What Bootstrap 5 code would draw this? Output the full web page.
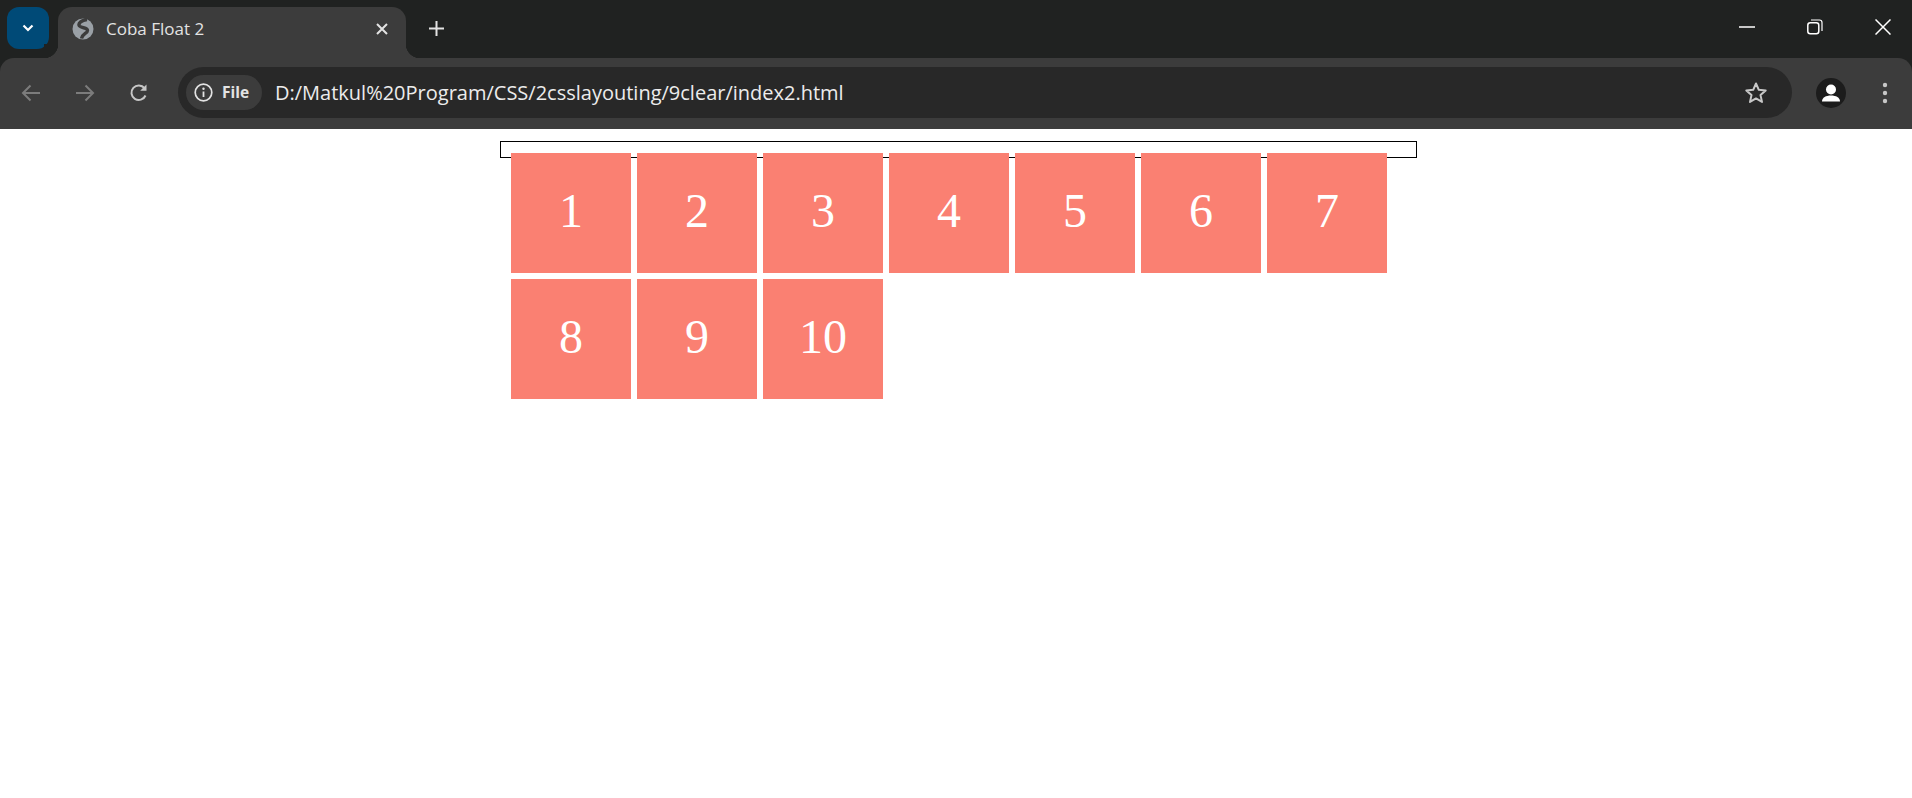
<!DOCTYPE html>
<html lang="en">
<head>
  <meta charset="UTF-8">
  <title>Coba Float 2</title>
  <link href="https://cdn.jsdelivr.net/npm/bootstrap@5.3.0/dist/css/bootstrap.min.css" rel="stylesheet">
  <style>
    body { background: #fff; font-family: "Open Sans", "Noto Sans", sans-serif; }

    /* browser chrome */
    .chrome-head { background: #202221; }
    .tab-strip { height: 58px; padding-left: 7px; }
    .tab-search { width: 42px; height: 42px; margin-top: 7px; background: #004a77; border-radius: 12px; }
    .tab-item { position: relative; width: 348px; height: 51px; margin-top: 7px; margin-left: 9px; padding: 0 17px 7px 14px; background: #3c3c3c; border-radius: 14px 14px 0 0; color: #e3e3e3; font-size: 17px; }
    .tab-item::before, .tab-item::after { content: ""; position: absolute; bottom: 0; width: 14px; height: 14px; }
    .tab-item::before { left: -14px; background: radial-gradient(circle at 0 0, #202221 14px, #3c3c3c 14.5px); }
    .tab-item::after { right: -14px; background: radial-gradient(circle at 100% 0, #202221 14px, #3c3c3c 14.5px); }
    .tab-title { margin-left: 12px; }
    .tab-plus { margin-left: 16px; margin-top: 6px; width: 28px; height: 44px; }
    .win-strip { margin-right: -5px; }
    .win-btn { width: 68px; height: 54px; }
    .tool-bar { height: 71px; background: #3c3c3c; border-top-left-radius: 14px; border-top-right-radius: 14px; padding-bottom: 2px; }
    .tool-btn { width: 54px; height: 54px; }
    .omni-box { width: 1614px; height: 51px; margin-left: 12px; padding: 0 13px 0 8px; background: #282828; border-radius: 26px; }
    .file-chip { width: 76px; height: 35px; padding-left: 8px; background: #3c3c3c; border-radius: 18px; color: #e3e3e3; font-size: 15.500px; font-weight: 700; }
    .file-chip span { margin-left: 9px; }
    .url-text { margin-left: 13px; color: #ececec; font-size: 20px; white-space: nowrap; }
    .star-wrap { width: 46px; }
    .avatar-wrap { width: 30px; height: 30px; margin-left: 24px; border-radius: 50%; background: #1c1c1c; overflow: hidden; }
    .menu-wrap { margin-left: 24px; width: 30px; }

    /* page content */
    .demo-frame { box-sizing: border-box; width: 917px; height: 17px; margin: 12px 0 0 500px; border: 1px solid #000; }
    .demo-grid { width: 917px; margin: -5px 0 0 511px; gap: 6px; }
    .num-box { flex: 0 0 120px; width: 120px; height: 120px; background: #fa8072; color: #fff; font-family: "Liberation Serif", "Times New Roman", serif; font-size: 48px; line-height: 115px; text-align: center; }
  </style>
</head>
<body>

  <div class="chrome-head">
    <div class="tab-strip d-flex align-items-start">
      <div class="tab-search d-flex align-items-center justify-content-center">
        <svg width="14" height="10" viewBox="0 0 14 10"><path d="M2.500 2.500 7 7l4.500-4.500" fill="none" stroke="#fff" stroke-width="2.200"/></svg>
      </div>
      <div class="tab-item d-flex align-items-center">
        <svg width="22" height="22" viewBox="0 0 22 22"><circle cx="11" cy="11" r="10.500" fill="#9aa0a6"/><path d="M15 1.500C10 2 5.500 5 7.500 8c2 2.500 8 1 8 4.500 0 3-5 3-6 8" fill="none" stroke="#3c3c3c" stroke-width="3.400"/></svg>
        <span class="tab-title flex-grow-1">Coba Float 2</span>
        <svg width="14" height="14" viewBox="0 0 14 14"><path d="M2 2l10 10M12 2 2 12" stroke="#e3e3e3" stroke-width="2"/></svg>
      </div>
      <div class="tab-plus d-flex align-items-center justify-content-center">
        <svg width="15" height="15" viewBox="0 0 15 15"><path d="M7.500 0v15M0 7.500h15" stroke="#e3e3e3" stroke-width="2"/></svg>
      </div>
      <div class="win-strip ms-auto d-flex">
        <div class="win-btn d-flex align-items-center justify-content-center">
          <svg width="16" height="2" viewBox="0 0 16 2"><path d="M0 1h16" stroke="#fff" stroke-width="1.500"/></svg>
        </div>
        <div class="win-btn d-flex align-items-center justify-content-center">
          <svg width="16" height="16" viewBox="0 0 16 16"><rect x=".8" y="3.800" width="11" height="11" rx="2.500" fill="none" stroke="#fff" stroke-width="1.500"/><path d="M4 1h8.500c1.500 0 2.500 1 2.500 2.500V12" fill="none" stroke="#fff" stroke-width="1.200"/></svg>
        </div>
        <div class="win-btn d-flex align-items-center justify-content-center">
          <svg width="16" height="16" viewBox="0 0 16 16"><path d="M.5.5l15 15M15.500.5l-15 15" stroke="#fff" stroke-width="1.500"/></svg>
        </div>
      </div>
    </div>

    <div class="tool-bar d-flex align-items-center ps-1">
      <div class="tool-btn d-flex align-items-center justify-content-center">
        <svg width="20" height="18" viewBox="0 0 20 18"><path d="M19 9H2M9.500 1.500 2 9l7.500 7.500" fill="none" stroke="#7c7c7c" stroke-width="2"/></svg>
      </div>
      <div class="tool-btn d-flex align-items-center justify-content-center">
        <svg width="20" height="18" viewBox="0 0 20 18"><path d="M1 9h17M10.500 1.500 18 9l-7.500 7.500" fill="none" stroke="#7c7c7c" stroke-width="2"/></svg>
      </div>
      <div class="tool-btn d-flex align-items-center justify-content-center">
        <svg width="20" height="20" viewBox="0 0 20 20"><path d="M16.500 12.500a7.300 7.300 0 1 1-1-7.300" fill="none" stroke="#c7c7c7" stroke-width="2"/><path d="M17.500 1.500v6.300h-6.300z" fill="#c7c7c7"/></svg>
      </div>
      <div class="omni-box d-flex align-items-center">
        <div class="file-chip d-flex align-items-center">
          <svg width="19" height="19" viewBox="0 0 19 19"><circle cx="9.500" cy="9.500" r="8.300" fill="none" stroke="#e3e3e3" stroke-width="1.700"/><path d="M9.500 8.500v5.500" stroke="#e3e3e3" stroke-width="1.800"/><circle cx="9.500" cy="5.700" r="1.200" fill="#e3e3e3"/></svg>
          <span>File</span>
        </div>
        <span class="url-text flex-grow-1">D:/Matkul%20Program/CSS/2csslayouting/9clear/index2.html</span>
        <div class="star-wrap d-flex justify-content-center">
          <svg width="24" height="23" viewBox="0 0 24 23"><path d="M12 2.500l2.800 6.300 6.900.7-5.200 4.600 1.500 6.800-6-3.500-6 3.500 1.500-6.800-5.200-4.600 6.900-.7z" fill="none" stroke="#c7c7c7" stroke-width="2" stroke-linejoin="round"/></svg>
        </div>
      </div>
      <div class="avatar-wrap flex-shrink-0">
        <svg width="30" height="30" viewBox="0 0 30 30"><circle cx="15" cy="11.500" r="5" fill="#fff"/><path d="M6 23.500c0-4 4-6 9-6s9 2 9 6z" fill="#fff"/></svg>
      </div>
      <div class="menu-wrap d-flex justify-content-center flex-shrink-0">
        <svg width="6" height="22" viewBox="0 0 6 22"><circle cx="3" cy="3" r="2.200" fill="#c7c7c7"/><circle cx="3" cy="11" r="2.200" fill="#c7c7c7"/><circle cx="3" cy="19" r="2.200" fill="#c7c7c7"/></svg>
      </div>
    </div>
  </div>

  <div class="demo-frame"></div>
  <div class="demo-grid d-flex flex-wrap">
    <div class="num-box">1</div>
    <div class="num-box">2</div>
    <div class="num-box">3</div>
    <div class="num-box">4</div>
    <div class="num-box">5</div>
    <div class="num-box">6</div>
    <div class="num-box">7</div>
    <div class="num-box">8</div>
    <div class="num-box">9</div>
    <div class="num-box">10</div>
  </div>

</body>
</html>
